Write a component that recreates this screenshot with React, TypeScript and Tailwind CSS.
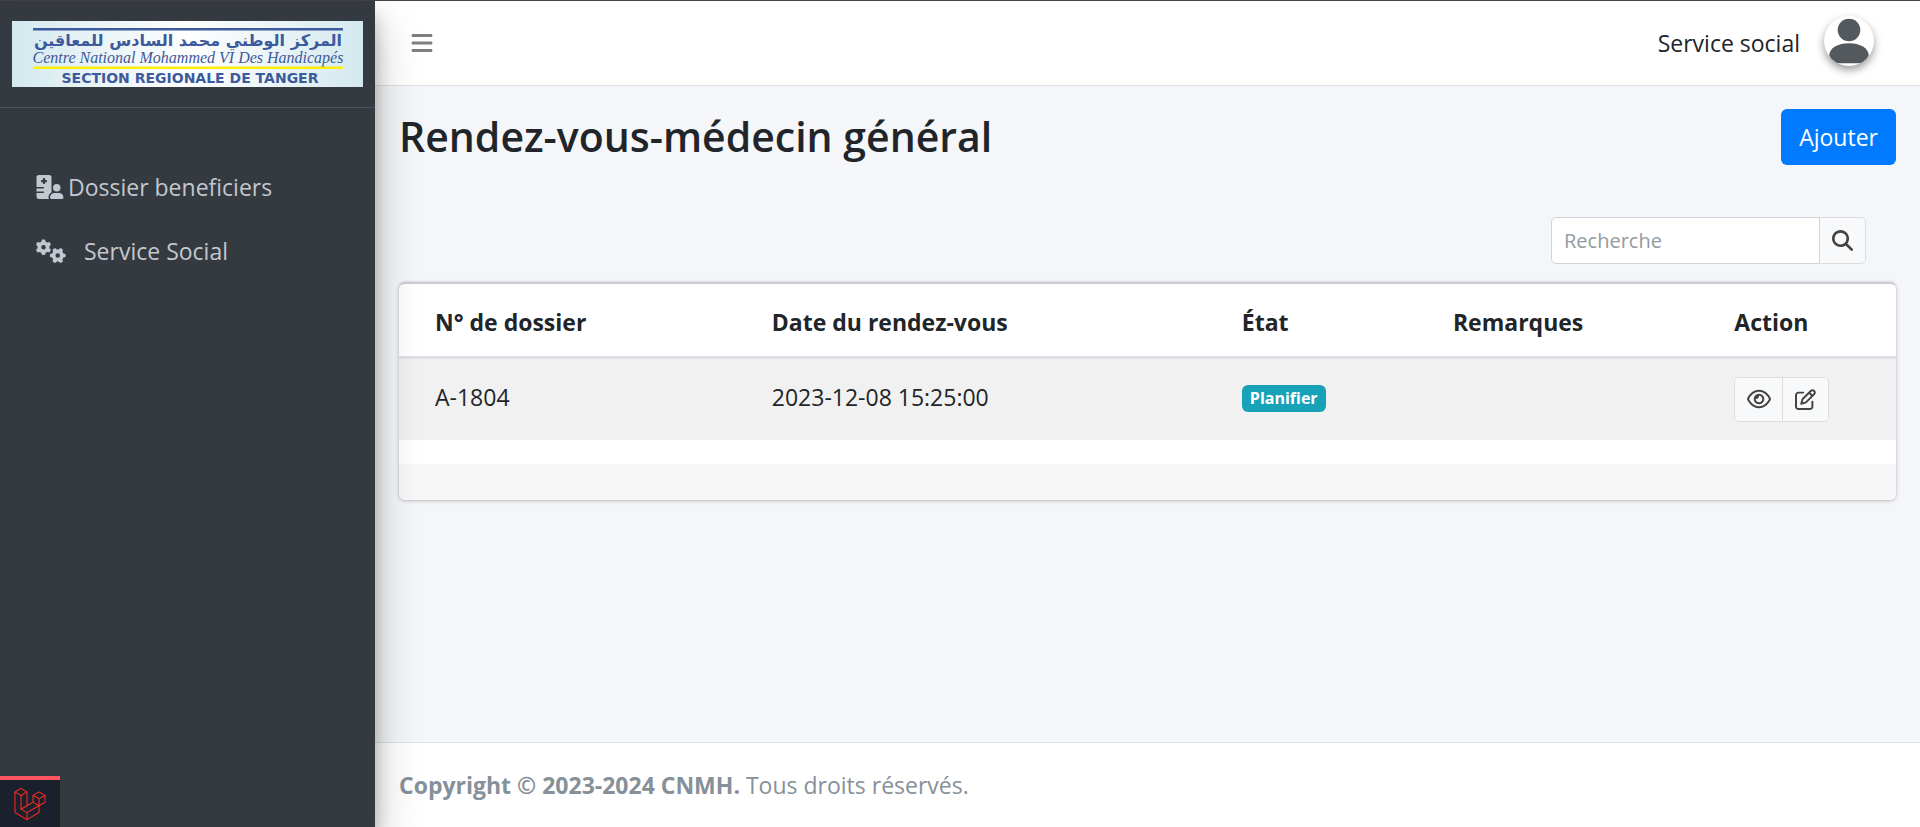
import React from "react";
import { FaBars, FaGears, FaHospitalUser, FaMagnifyingGlass, FaRegEye, FaRegPenToSquare } from "react-icons/fa6";
import { SiLaravel } from "react-icons/si";

type Appointment = { id: string; date: string; state: string; remarks: string };

const appointments: Appointment[] = [
  { id: "A-1804", date: "2023-12-08 15:25:00", state: "Planifier", remarks: "" },
];

function Logo() {
  return (
    <svg viewBox="0 0 351 66" className="block h-auto w-full" role="img" aria-label="Centre National Mohammed VI des Handicapés">
      <defs>
        <linearGradient id="logo-bg" x1="0" x2="1" y1="0" y2="0">
          <stop offset="0" stopColor="#d3e9ef" />
          <stop offset="0.25" stopColor="#eaf4f7" />
          <stop offset="0.5" stopColor="#fefefe" />
          <stop offset="0.75" stopColor="#eaf4f7" />
          <stop offset="1" stopColor="#d3e9ef" />
        </linearGradient>
      </defs>
      <rect width="351" height="66" fill="url(#logo-bg)" />
      <rect x="21" y="7" width="310" height="2.500" fill="#3d5a9c" />
      <text x="176" y="25" textAnchor="middle" direction="rtl" fontFamily="'DejaVu Sans', sans-serif" fontSize="16" fontWeight="700" fill="#3d5a9c">
        المركز الوطني محمد السادس للمعاقين
      </text>
      <text x="176" y="42" textAnchor="middle" fontFamily="'Liberation Serif', serif" fontStyle="italic" fontSize="16" fill="#3d5a9c">
        Centre National Mohammed VI Des Handicapés
      </text>
      <rect x="21" y="45.500" width="310" height="2.500" fill="#fdee0a" />
      <text x="178" y="62" textAnchor="middle" fontFamily="'DejaVu Sans', sans-serif" fontSize="14" fontWeight="700" fill="#3d5a9c">
        SECTION REGIONALE DE TANGER
      </text>
    </svg>
  );
}

function Avatar() {
  return (
    <svg viewBox="0 0 50 50" className="size-[50px] rounded-full bg-white shadow-[0_4px_9px_rgba(0,0,0,0.4)]" aria-hidden="true">
      <circle cx="25" cy="14" r="11.3" fill="#53595d" />
      <path d="M5.3 39.500C5.3 32 14 27.300 25 27.300S44.700 32 44.700 39.500C43.300 42.700 41.300 45.300 38.500 47.300H11.500C8.700 45.300 6.700 42.700 5.300 39.500Z" fill="#53595d" />
    </svg>
  );
}

function Sidebar() {
  return (
    <aside className="relative z-10 flex w-[375px] shrink-0 flex-col bg-[#343a40] text-[#c2c7d0] shadow-[0_21px_42px_rgba(0,0,0,0.25),0_15px_15px_rgba(0,0,0,0.22)]">
      <a href="#" className="block border-b border-[#4b545c] px-3 pt-5 pb-5">
        <Logo />
      </a>
      <nav className="mt-[47px] flex flex-col px-9">
        <a href="#" className="flex h-16 items-center gap-1">
          <FaHospitalUser className="h-6 w-7 shrink-0" />
          Dossier beneficiers
        </a>
        <a href="#" className="flex h-16 items-center gap-[18px]">
          <FaGears className="h-6 w-[30px] shrink-0" />
          Service Social
        </a>
      </nav>
    </aside>
  );
}

function AppointmentTable() {
  return (
    <section className="overflow-hidden rounded-md border-t-2 border-[#cbced2] bg-white shadow-[0_0_2px_rgba(0,0,0,0.13),0_1px_4px_rgba(0,0,0,0.2)]">
      <table className="w-full table-fixed text-left">
        <colgroup>
          <col className="w-[23.7%]" />
          <col className="w-[31.4%]" />
          <col className="w-[14.1%]" />
          <col className="w-[18.8%]" />
          <col className="w-[12%]" />
        </colgroup>
        <thead>
          <tr className="h-[73px] border-b-3 border-[#dee2e6]">
            <th className="pt-1 pr-4 pl-9 font-bold">N° de dossier</th>
            <th className="px-[18px] pt-1 font-bold">Date du rendez-vous</th>
            <th className="px-[18px] pt-1 font-bold">État</th>
            <th className="px-[18px] pt-1 font-bold">Remarques</th>
            <th className="px-[18px] pt-1 font-bold">Action</th>
          </tr>
        </thead>
        <tbody>
          {appointments.map((item) => (
            <tr key={item.id} className="h-[83px] bg-[#f1f1f1] align-top">
              <td className="pt-5 pr-4 pl-9">{item.id}</td>
              <td className="px-[18px] pt-5">{item.date}</td>
              <td className="px-[18px] pt-[26px]">
                <span className="flex h-[27px] w-fit items-center rounded-md bg-[#17a2b8] px-2 text-base font-bold text-white">{item.state}</span>
              </td>
              <td className="px-[18px] pt-5">{item.remarks}</td>
              <td className="px-[18px] pt-[18px]">
                <div className="flex h-[45px] w-[95px] divide-x divide-[#ddd] rounded-[5px] border border-[#ddd] bg-[#f8f9fa] text-[#444]">
                  <button type="button" aria-label="Voir" className="flex w-12 items-center justify-center">
                    <FaRegEye className="size-6" />
                  </button>
                  <button type="button" aria-label="Modifier" className="flex flex-1 items-center justify-center">
                    <FaRegPenToSquare className="size-[21px]" />
                  </button>
                </div>
              </td>
            </tr>
          ))}
        </tbody>
      </table>
      <div className="mt-6 h-9 bg-[#f7f7f7]" />
    </section>
  );
}

export default function App() {
  return (
    <div className="flex min-h-screen border-t border-[#444] bg-[#f4f6f9] font-['Open_Sans',sans-serif] text-[23px] leading-9 text-[#212529]">
      <Sidebar />
      <div className="flex min-w-0 flex-1 flex-col">
        <header className="flex h-[85px] items-center justify-between border-b border-[#dee2e6] bg-white pr-[46px] pl-[35px]">
          <button type="button" aria-label="Menu" className="text-[#7f7f7f]">
            <FaBars className="size-6" />
          </button>
          <div className="flex items-center gap-6">
            <span>Service social</span>
            <div className="pb-1">
              <Avatar />
            </div>
          </div>
        </header>
        <main className="flex-1 px-6 pt-[23px]">
          <div className="flex items-start justify-between">
            <h1 className="text-[41px] leading-[54px] font-semibold">Rendez-vous-médecin général</h1>
            <a href="#" className="flex h-14 items-center rounded-md bg-[#007bff] px-[18px] text-white">
              Ajouter
            </a>
          </div>
          <form className="mt-[52px] mr-[30px] mb-[18px] ml-auto flex h-[47px] w-[315px]">
            <input
              type="search"
              aria-label="Recherche"
              placeholder="Recherche"
              className="min-w-0 flex-1 rounded-l-[5px] border border-[#ced4da] bg-white px-3 text-xl placeholder:text-[#939ba2]"
            />
            <button type="button" aria-label="Rechercher" className="flex w-[46px] items-center justify-center rounded-r-[5px] border border-l-0 border-[#ddd] bg-[#f8f9fa] text-[#444]">
              <FaMagnifyingGlass className="size-[21px]" />
            </button>
          </form>
          <AppointmentTable />
        </main>
        <footer className="border-t border-[#dee2e6] bg-white p-6 text-[#869099]">
          <strong className="font-bold">Copyright © 2023-2024 CNMH.</strong> Tous droits réservés.
        </footer>
      </div>
      <button type="button" aria-label="Laravel" className="fixed bottom-0 left-0 z-20 flex h-[51px] w-[60px] items-center border-t-4 border-[#ff5661] bg-[#1a202c] pl-3.5 text-[#ff2d20]">
        <SiLaravel className="size-8" />
      </button>
    </div>
  );
}
